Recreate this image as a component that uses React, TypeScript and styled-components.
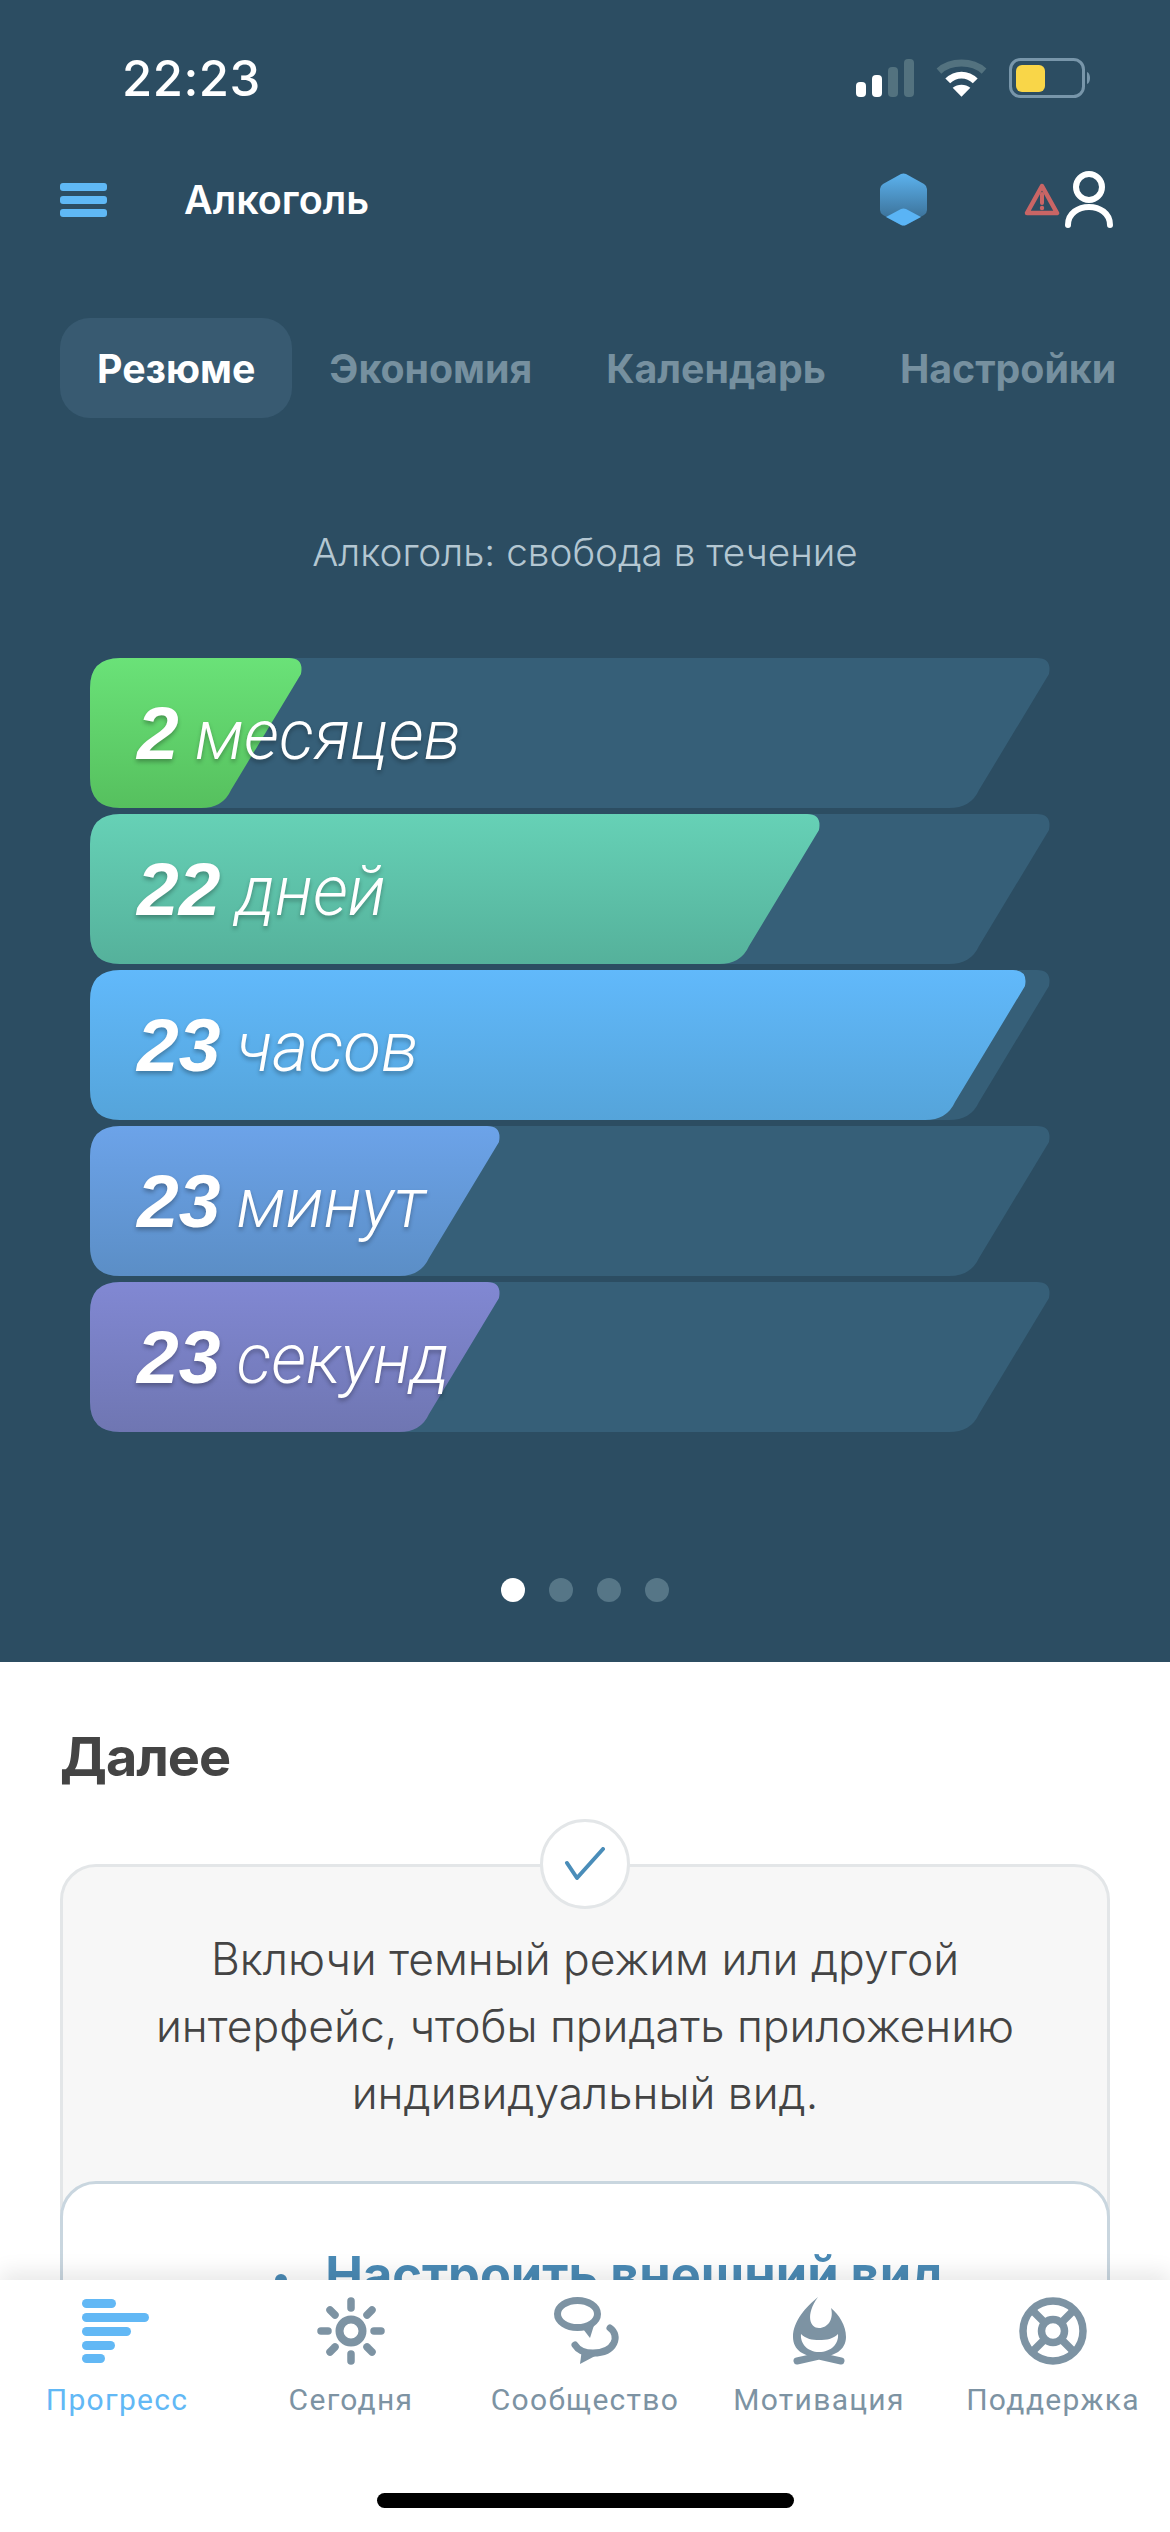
import * as React from 'react'
import styled, { createGlobalStyle } from 'styled-components'

const GlobalStyle = createGlobalStyle`
  html, body {
    margin: 0;
    padding: 0;
    background: #fff;
  }
  * {
    box-sizing: border-box;
  }
`

const Screen = styled.div`
  width: 1170px;
  height: 2532px;
  display: flex;
  flex-direction: column;
  overflow: hidden;
  font-family: Inter, 'Liberation Sans', sans-serif;
  background: #fff;
`

const Scroll = styled.div`
  height: 2280px;
  flex: none;
  overflow: hidden;
`

const Hero = styled.section`
  height: 1662px;
  background: #2c4d62;
  display: flex;
  flex-direction: column;
`

const StatusBar = styled.div`
  height: 156px;
  flex: none;
  display: flex;
  align-items: center;
  padding: 0 79px 0 122px;
  color: #fff;
`

const Clock = styled.div`
  font-size: 49px;
  font-weight: 500;
  letter-spacing: 0.5px;
  flex: 1;
`

const StatusIcons = styled.div`
  display: flex;
  align-items: center;
  gap: 22px;
`

const Nav = styled.div`
  height: 88px;
  flex: none;
  display: flex;
  align-items: center;
  padding: 0 57px 0 60px;
`

const Title = styled.div`
  margin-left: 77px;
  flex: 1;
  color: #fff;
  font-size: 39.5px;
  font-weight: 600;
`

const NavRight = styled.div`
  display: flex;
  align-items: flex-end;
`

const Tabs = styled.div`
  display: flex;
  margin: 74px 0 0 60px;
`

const Tab = styled.div<{ $active?: boolean }>`
  height: 100px;
  display: flex;
  align-items: center;
  padding: 0 37px;
  border-radius: 30px;
  white-space: nowrap;
  font-size: 39.3px;
  font-weight: 700;
  color: ${(p) => (p.$active ? '#fff' : '#76909f')};
  background: ${(p) => (p.$active ? '#385a71' : 'transparent')};
`

const Subtitle = styled.div`
  margin-top: 104px;
  height: 60px;
  line-height: 60px;
  text-align: center;
  font-size: 38.7px;
  font-weight: 300;
  color: #b4c7d2;
`

const Bars = styled.div`
  margin: 76px 0 0 90px;
  width: 962px;
  display: flex;
  flex-direction: column;
  gap: 6px;
`

const barPath = (w: number) =>
  `M30 0 L${w - 14} 0 Q${w + 1} 0 ${w - 2} 16 L${w - 72} 132 Q${w - 80} 150 ${w - 102} 150 L30 150 Q0 150 0 120 L0 30 Q0 0 30 0 Z`

const Bar = styled.div`
  position: relative;
  height: 150px;
  display: flex;
  align-items: center;
`

const Track = styled.div`
  position: absolute;
  inset: 0;
  background: #365f78;
  clip-path: path('${barPath(961)}');
`

const Fill = styled.div<{ $w: number; $from: string; $to: string }>`
  position: absolute;
  inset: 0;
  background: linear-gradient(${(p) => p.$from}, ${(p) => p.$to});
  clip-path: path('${(p) => barPath(p.$w)}');
`

const BarLabel = styled.div`
  position: relative;
  display: flex;
  align-items: baseline;
  padding-left: 47px;
  color: #fff;
  font-family: Roboto, 'Liberation Sans', sans-serif;
  font-style: italic;
  font-size: 69.5px;
  text-shadow: 0 3px 4px rgba(0, 0, 0, 0.28);
`

const BarValue = styled.span`
  font-family: 'Liberation Sans', sans-serif;
  font-size: 75px;
  font-weight: 700;
  margin-right: 16px;
`

const BarUnit = styled.span`
  font-weight: 300;
`

const Dots = styled.div`
  display: flex;
  justify-content: center;
  gap: 24px;
  margin-top: 146px;
`

const Dot = styled.div<{ $active?: boolean }>`
  width: 24px;
  height: 24px;
  border-radius: 50%;
  background: ${(p) => (p.$active ? '#fff' : '#567687')};
`

const Next = styled.section`
  padding: 65px 60px 0;
`

const NextTitle = styled.h2`
  margin: 0;
  height: 60px;
  line-height: 60px;
  font-size: 54px;
  font-weight: 700;
  letter-spacing: -1px;
  color: #444;
`

const Card = styled.div`
  position: relative;
  margin-top: 77px;
  background: #f7f7f7;
  border: 3px solid #e3e6e8;
  border-radius: 36px;
  padding-top: 59px;
`

const CheckBadge = styled.div`
  position: absolute;
  top: -48px;
  left: 477px;
  width: 90px;
  height: 90px;
  border-radius: 50%;
  background: #fff;
  border: 3px solid #e3e6e8;
  display: flex;
  align-items: center;
  justify-content: center;
`

const CardText = styled.p`
  margin: 0;
  padding: 0 40px;
  text-align: center;
  font-size: 44.4px;
  font-weight: 300;
  line-height: 67px;
  color: #444;
`

const ActionCard = styled.div`
  margin: 54px -3px 0;
  height: 220px;
  background: #fff;
  border: 3px solid #c9d6df;
  border-radius: 36px;
  display: flex;
  justify-content: center;
  align-items: flex-start;
  gap: 38px;
  padding: 63px 0 0 50px;
`

const ActionDot = styled.div`
  width: 12px;
  height: 12px;
  margin-top: 27px;
  border-radius: 50%;
  background: #4a8ab5;
`

const ActionText = styled.div`
  font-size: 50.5px;
  font-weight: 700;
  line-height: 56px;
  color: #4a8ab5;
`

const TabBar = styled.nav`
  position: relative;
  flex: 1;
  background: #fff;
  box-shadow: 0 -8px 20px rgba(0, 0, 0, 0.09);
  display: flex;
  flex-direction: column;
`

const TabItems = styled.div`
  display: grid;
  grid-template-columns: repeat(5, 234px);
  padding-top: 17px;
`

const TabItem = styled.div<{ $active?: boolean }>`
  display: flex;
  flex-direction: column;
  align-items: center;
  color: ${(p) => (p.$active ? '#62b8f5' : '#7d93a3')};
  fill: currentColor;
`

const TabLabel = styled.div`
  margin-top: 15px;
  font-family: Roboto, 'Liberation Sans', sans-serif;
  font-size: 30px;
  line-height: 36px;
  letter-spacing: 1.3px;
  white-space: nowrap;
`

const HomeIndicator = styled.div`
  width: 417px;
  height: 15px;
  margin: 75px auto 0;
  border-radius: 8px;
  background: #000;
`

const SignalIcon = () => (
  <svg width="58" height="38" viewBox="0 0 58 38">
    <rect x="0" y="23" width="10" height="15" rx="4" fill="#fff" />
    <rect x="16" y="16" width="10" height="22" rx="4" fill="#fff" />
    <rect x="32" y="8" width="10" height="30" rx="4" fill="#53727f" />
    <rect x="48" y="0" width="10" height="38" rx="4" fill="#53727f" />
  </svg>
)

const WifiIcon = () => (
  <svg width="51" height="38" viewBox="0 0 52 38" fill="none">
    <path d="M3 12 C15 1 37 1 49 12" stroke="#53727f" strokeWidth="7" />
    <path d="M12 22 C20 14 32 14 40 22" stroke="#fff" strokeWidth="7" />
    <path d="M26 38 L17 29 C22 25 30 25 35 29 Z" fill="#fff" />
  </svg>
)

const BatteryIcon = () => (
  <svg width="82" height="40" viewBox="0 0 82 40">
    <rect x="1.5" y="1.5" width="73" height="37" rx="10" fill="none" stroke="#7896aa" strokeWidth="3" />
    <rect x="7" y="7" width="29" height="27" rx="6" fill="#f9d648" />
    <path d="M78 14 C82 15 82 25 78 26 Z" fill="#7896aa" />
  </svg>
)

const MenuIcon = () => (
  <svg width="47" height="34" viewBox="0 0 47 34" fill="#5fb8f5">
    <rect width="47" height="8" rx="3" />
    <rect y="13" width="47" height="8" rx="3" />
    <rect y="26" width="47" height="8" rx="3" />
  </svg>
)

const GemIcon = () => (
  <svg width="47" height="53" viewBox="0 0 47 53" style={{ marginRight: 97, marginBottom: 3 }}>
    <defs>
      <linearGradient id="gem" x1="0" y1="0" x2="0" y2="1">
        <stop offset="0" stopColor="#5cb2ee" />
        <stop offset="1" stopColor="#37688c" />
      </linearGradient>
    </defs>
    <path
      d="M21 1 Q23.5 0 26 1 L44 11 Q47 13 47 16 L47 37 Q47 40 44 42 L26 52 Q23.5 53 21 52 L3 42 Q0 40 0 37 L0 16 Q0 13 3 11 Z"
      fill="url(#gem)"
    />
    <path d="M21 36 Q23.5 35 26 36 L41 44 L26 52 Q23.5 53 21 52 L6 44 Z" fill="#5ab4f5" />
  </svg>
)

const WarningIcon = () => (
  <svg width="36" height="34" viewBox="0 0 36 34" fill="none" style={{ marginBottom: 12, marginRight: 5 }}>
    <path d="M18 3 L33 30 L3 30 Z" stroke="#c96565" strokeWidth="4.5" strokeLinejoin="round" />
    <path d="M18 11 L18 20" stroke="#c96565" strokeWidth="4" strokeLinecap="round" />
    <circle cx="18" cy="25" r="2.2" fill="#c96565" />
  </svg>
)

const PersonIcon = () => (
  <svg width="48" height="58" viewBox="0 0 48 58" fill="none" stroke="#fff" strokeWidth="6" strokeLinecap="round">
    <circle cx="24" cy="16" r="13" />
    <path d="M3 54 C3 30 45 30 45 54" />
  </svg>
)

const CheckIcon = () => (
  <svg width="42" height="34" viewBox="0 0 42 34" fill="none">
    <path d="M3 16 L13 31 L39 2" stroke="#4a8db9" strokeWidth="4" strokeLinecap="round" strokeLinejoin="round" />
  </svg>
)

const ProgressIcon = () => (
  <svg width="70" height="70" viewBox="0 0 70 70">
    <rect x="0" y="2" width="34" height="9" rx="4.5" />
    <rect x="0" y="16" width="67" height="9" rx="4.5" />
    <rect x="0" y="30" width="49" height="9" rx="4.5" />
    <rect x="0" y="44" width="33" height="9" rx="4.5" />
    <rect x="0" y="57" width="23" height="9" rx="4.5" />
  </svg>
)

const SunIcon = () => (
  <svg width="70" height="70" viewBox="0 0 70 70" fill="none" stroke="currentColor">
    <circle cx="35" cy="34" r="11.5" strokeWidth="8" />
    <g strokeWidth="7.5" strokeLinecap="round">
      <path d="M35 4 L35 11" />
      <path d="M35 57 L35 64" />
      <path d="M5 34 L12 34" />
      <path d="M58 34 L65 34" />
      <path d="M14 13 L19 18" />
      <path d="M56 13 L51 18" />
      <path d="M14 55 L19 50" />
      <path d="M56 55 L51 50" />
    </g>
  </svg>
)

const CommunityIcon = () => (
  <svg width="70" height="70" viewBox="0 0 70 70" fill="none" stroke="currentColor">
    <ellipse cx="27.5" cy="17" rx="20" ry="13.5" strokeWidth="7" />
    <path d="M30 28 L40 41 L45 25 Z" fill="currentColor" stroke="none" />
    <path d="M60 31 C70 38 66 56 43 56 C35 56 28 53 25 48" strokeWidth="7" strokeLinecap="round" />
    <path d="M32 52 L30 67 L47 58 Z" fill="currentColor" stroke="none" />
  </svg>
)

const FlameIcon = () => (
  <svg width="70" height="70" viewBox="0 0 70 70">
    <path d="M34 0 C22 10 9 24 9 40 C9 53 20 60 35 60 C50 60 62 53 62 40 C62 28 55 18 47 11 C50 22 44 31 35 31 C26 31 21 18 34 0 Z" />
    <path d="M17 37 C22 42 28 43 35 43 C43 43 49 42 54 37 C55 47 47 55 35 55 C24 55 16 47 17 37 Z" fill="#fff" />
    <path d="M13 64 L35 59 L57 64" fill="none" stroke="currentColor" strokeWidth="7" strokeLinecap="round" />
  </svg>
)

const SupportIcon = () => (
  <svg width="70" height="70" viewBox="0 0 70 70" fill="none" stroke="currentColor" strokeWidth="7.5">
    <circle cx="35" cy="34" r="30" />
    <circle cx="35" cy="34" r="11.5" />
    <path d="M14 13 L27 26 M56 13 L43 26 M14 55 L27 42 M56 55 L43 42" />
  </svg>
)

const bars = [
  { value: '2', unit: 'месяцев', w: 213, from: '#6ae278', to: '#56c05e' },
  { value: '22', unit: 'дней', w: 731, from: '#66d1b6', to: '#55b19b' },
  { value: '23', unit: 'часов', w: 937, from: '#61b9fb', to: '#55a4da' },
  { value: '23', unit: 'минут', w: 411, from: '#6ca3e9', to: '#5b8ec6' },
  { value: '23', unit: 'секунд', w: 411, from: '#8188d3', to: '#6f76b2' },
]

const tabs = ['Резюме', 'Экономия', 'Календарь', 'Настройки']

const App = () => (
  <Screen>
    <GlobalStyle />
    <Scroll>
      <Hero>
        <StatusBar>
          <Clock>22:23</Clock>
          <StatusIcons>
            <SignalIcon />
            <WifiIcon />
            <BatteryIcon />
          </StatusIcons>
        </StatusBar>
        <Nav>
          <MenuIcon />
          <Title>Алкоголь</Title>
          <NavRight>
            <GemIcon />
            <WarningIcon />
            <PersonIcon />
          </NavRight>
        </Nav>
        <Tabs>
          {tabs.map((t, i) => (
            <Tab key={t} $active={i === 0}>
              {t}
            </Tab>
          ))}
        </Tabs>
        <Subtitle>Алкоголь: свобода в течение</Subtitle>
        <Bars>
          {bars.map((b) => (
            <Bar key={b.unit}>
              <Track />
              <Fill $w={b.w} $from={b.from} $to={b.to} />
              <BarLabel>
                <BarValue>{b.value}</BarValue>
                <BarUnit>{b.unit}</BarUnit>
              </BarLabel>
            </Bar>
          ))}
        </Bars>
        <Dots>
          {[0, 1, 2, 3].map((i) => (
            <Dot key={i} $active={i === 0} />
          ))}
        </Dots>
      </Hero>
      <Next>
        <NextTitle>Далее</NextTitle>
        <Card>
          <CheckBadge>
            <CheckIcon />
          </CheckBadge>
          <CardText>
            Включи темный режим или другой
            <br />
            интерфейс, чтобы придать приложению
            <br />
            индивидуальный вид.
          </CardText>
          <ActionCard>
            <ActionDot />
            <ActionText>Настроить внешний вид</ActionText>
          </ActionCard>
        </Card>
      </Next>
    </Scroll>
    <TabBar>
      <TabItems>
        <TabItem $active>
          <ProgressIcon />
          <TabLabel>Прогресс</TabLabel>
        </TabItem>
        <TabItem>
          <SunIcon />
          <TabLabel>Сегодня</TabLabel>
        </TabItem>
        <TabItem>
          <CommunityIcon />
          <TabLabel>Сообщество</TabLabel>
        </TabItem>
        <TabItem>
          <FlameIcon />
          <TabLabel>Мотивация</TabLabel>
        </TabItem>
        <TabItem>
          <SupportIcon />
          <TabLabel>Поддержка</TabLabel>
        </TabItem>
      </TabItems>
      <HomeIndicator />
    </TabBar>
  </Screen>
)

export default App
